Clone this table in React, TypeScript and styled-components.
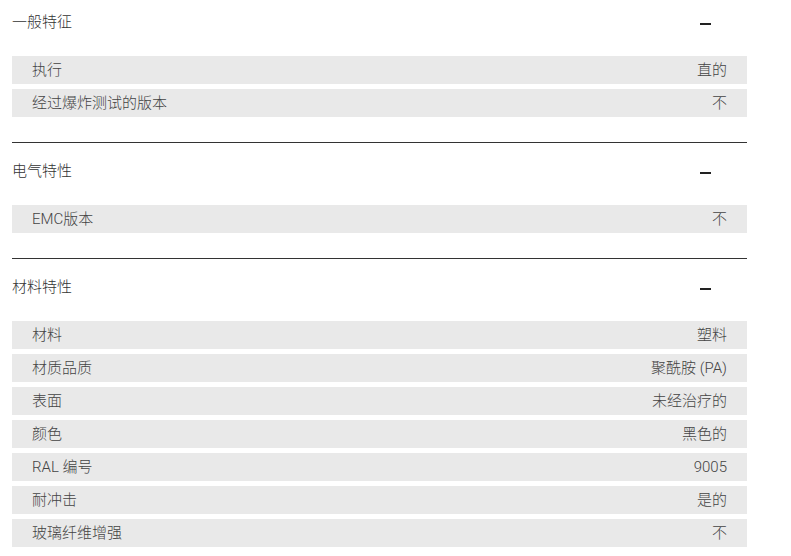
import React from 'react';
import styled, { createGlobalStyle } from 'styled-components';

const GlobalStyle = createGlobalStyle`
  body {
    margin: 0;
    background: #ffffff;
    font-family: "Roboto", "Noto Sans CJK SC", sans-serif;
  }
`;

const Page = styled.div`
  width: 735px;
  padding-left: 12px;
  margin-top: -6px;
`;

const Section = styled.section<{ $first?: boolean }>`
  border-top: ${(p) => (p.$first ? 'none' : '1px solid #333333')};
  padding-bottom: 25px;
`;

const SectionHeader = styled.div`
  height: 56px;
  display: flex;
  align-items: center;
  justify-content: space-between;
  font-size: 15px;
  font-weight: 300;
  line-height: 20px;
  color: #333333;
`;

const Toggle = styled.span`
  display: block;
  width: 11px;
  height: 2px;
  background: #222222;
  margin-right: 36px;
  margin-top: 3px;
`;

const Rows = styled.div`
  display: flex;
  flex-direction: column;
  gap: 5px;
  margin-top: 6px;
`;

const Row = styled.div`
  height: 28px;
  display: flex;
  align-items: center;
  justify-content: space-between;
  padding: 0 20px 1px;
  box-sizing: border-box;
  background: #e9e9e9;
  font-size: 15px;
  font-weight: 300;
  line-height: 20px;
  color: #444444;
`;

type Item = [string, string];

const sections: { title: string; items: Item[] }[] = [
  {
    title: '一般特征',
    items: [
      ['执行', '直的'],
      ['经过爆炸测试的版本', '不'],
    ],
  },
  {
    title: '电气特性',
    items: [['EMC版本', '不']],
  },
  {
    title: '材料特性',
    items: [
      ['材料', '塑料'],
      ['材质品质', '聚酰胺 (PA)'],
      ['表面', '未经治疗的'],
      ['颜色', '黑色的'],
      ['RAL 编号', '9005'],
      ['耐冲击', '是的'],
      ['玻璃纤维增强', '不'],
    ],
  },
];

export default function App() {
  return (
    <>
      <GlobalStyle />
      <Page>
        {sections.map((s, i) => (
          <Section key={s.title} $first={i === 0}>
            <SectionHeader>
              <span>{s.title}</span>
              <Toggle />
            </SectionHeader>
            <Rows>
              {s.items.map(([label, value]) => (
                <Row key={label}>
                  <span>{label}</span>
                  <span>{value}</span>
                </Row>
              ))}
            </Rows>
          </Section>
        ))}
      </Page>
    </>
  );
}
